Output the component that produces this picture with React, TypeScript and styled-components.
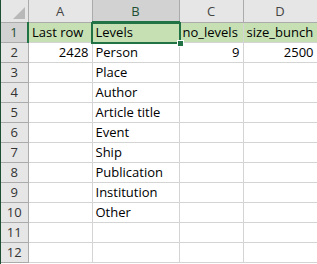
import React from 'react';
import styled, { createGlobalStyle } from 'styled-components';

const colors = {
  grid: '#d4d4d4',
  headerBg: '#e6e6e6',
  headerSel: '#d2d2d2',
  headerLine: '#ababab',
  green: '#217346',
  fill: '#c6e0b4',
  text: '#000',
};

const GlobalStyle = createGlobalStyle`
  html, body { margin: 0; padding: 0; background: #fff; }
  body { font-family: "Open Sans", "Noto Sans", sans-serif; overflow: hidden; }
`;

type Cell = { v: string; num?: boolean };

const columns = ['A', 'B', 'C', 'D'];
const widths = [27, 64, 87, 64, 74];

const rows: Cell[][] = [
  [{ v: 'Last row' }, { v: 'Levels' }, { v: 'no_levels' }, { v: 'size_bunch' }],
  [{ v: '2428', num: true }, { v: 'Person' }, { v: '9', num: true }, { v: '2500', num: true }],
  [{ v: '' }, { v: 'Place' }, { v: '' }, { v: '' }],
  [{ v: '' }, { v: 'Author' }, { v: '' }, { v: '' }],
  [{ v: '' }, { v: 'Article title' }, { v: '' }, { v: '' }],
  [{ v: '' }, { v: 'Event' }, { v: '' }, { v: '' }],
  [{ v: '' }, { v: 'Ship' }, { v: '' }, { v: '' }],
  [{ v: '' }, { v: 'Publication' }, { v: '' }, { v: '' }],
  [{ v: '' }, { v: 'Institution' }, { v: '' }, { v: '' }],
  [{ v: '' }, { v: 'Other' }, { v: '' }, { v: '' }],
  [{ v: '' }, { v: '' }, { v: '' }, { v: '' }],
  [{ v: '' }, { v: '' }, { v: '' }, { v: '' }],
];

export default function App() {
  return (
    <>
      <GlobalStyle />
      <Sheet>
        <Grid>
          <colgroup>
            {widths.map((w, i) => (
              <col key={i} style={{ width: w }} />
            ))}
          </colgroup>
          <thead>
            <tr>
              <Corner>
                <CornerMark />
              </Corner>
              {columns.map((c) => (
                <ColHead key={c} $selected={c === 'B'}>
                  {c}
                </ColHead>
              ))}
            </tr>
          </thead>
          <tbody>
            {rows.map((r, ri) => (
              <tr key={ri}>
                <RowHead $selected={ri === 0}>{ri + 1}</RowHead>
                {r.map((cell, ci) => (
                  <DataCell key={ci} $num={cell.num} $filled={ri === 0}>
                    {cell.v}
                    {ri === 0 && ci === 1 && (
                      <Selection>
                        <Handle />
                      </Selection>
                    )}
                  </DataCell>
                ))}
              </tr>
            ))}
          </tbody>
        </Grid>
      </Sheet>
    </>
  );
}

const Sheet = styled.div`
  width: 317px;
  height: 264px;
  overflow: hidden;
  border-left: 1px solid #1d4f33;
  box-sizing: border-box;
`;

const Grid = styled.table`
  border-collapse: collapse;
  table-layout: fixed;
  width: ${widths.reduce((a, b) => a + b, 0)}px;
  font-size: 13px;
  color: ${colors.text};
`;

const Corner = styled.th`
  height: 21px;
  background: ${colors.headerBg};
  border-right: 1px solid ${colors.headerLine};
  border-bottom: 1px solid ${colors.headerLine};
  position: relative;
  padding: 0;
`;

const CornerMark = styled.div`
  position: absolute;
  right: 3px;
  bottom: 3px;
  width: 0;
  height: 0;
  border-left: 12px solid transparent;
  border-bottom: 12px solid #b8b8b8;
`;

const ColHead = styled.th<{ $selected?: boolean }>`
  height: 21px;
  padding: 0;
  font-weight: normal;
  font-size: 13px;
  text-align: center;
  color: ${(p) => (p.$selected ? '#1e4e33' : '#444')};
  background: ${(p) => (p.$selected ? colors.headerSel : colors.headerBg)};
  border-right: 1px solid ${colors.headerLine};
  border-bottom: ${(p) => (p.$selected ? `2px solid ${colors.green}` : `1px solid ${colors.headerLine}`)};
`;

const RowHead = styled.th<{ $selected?: boolean }>`
  height: 19px;
  padding: 0;
  font-weight: normal;
  font-size: 13px;
  line-height: 19px;
  text-align: center;
  color: ${(p) => (p.$selected ? '#1e4e33' : '#333')};
  background: ${(p) => (p.$selected ? colors.headerSel : colors.headerBg)};
  border-bottom: 1px solid ${colors.headerLine};
  border-right: ${(p) => (p.$selected ? `2px solid ${colors.green}` : `1px solid ${colors.headerLine}`)};
`;

const DataCell = styled.td<{ $num?: boolean; $filled?: boolean }>`
  position: relative;
  height: 19px;
  padding: 0 3px;
  line-height: 19px;
  white-space: nowrap;
  overflow: visible;
  text-align: ${(p) => (p.$num ? 'right' : 'left')};
  background: ${(p) => (p.$filled ? colors.fill : '#fff')};
  border-right: 1px solid ${colors.grid};
  border-bottom: 1px solid ${colors.grid};
`;

const Selection = styled.div`
  position: absolute;
  z-index: 2;
  left: -2px;
  top: -1px;
  right: -2px;
  bottom: -2px;
  border: 2px solid ${colors.green};
  pointer-events: none;
`;

const Handle = styled.div`
  position: absolute;
  right: -5px;
  bottom: -5px;
  width: 5px;
  height: 5px;
  background: ${colors.green};
  border: 1px solid #fff;
`;
